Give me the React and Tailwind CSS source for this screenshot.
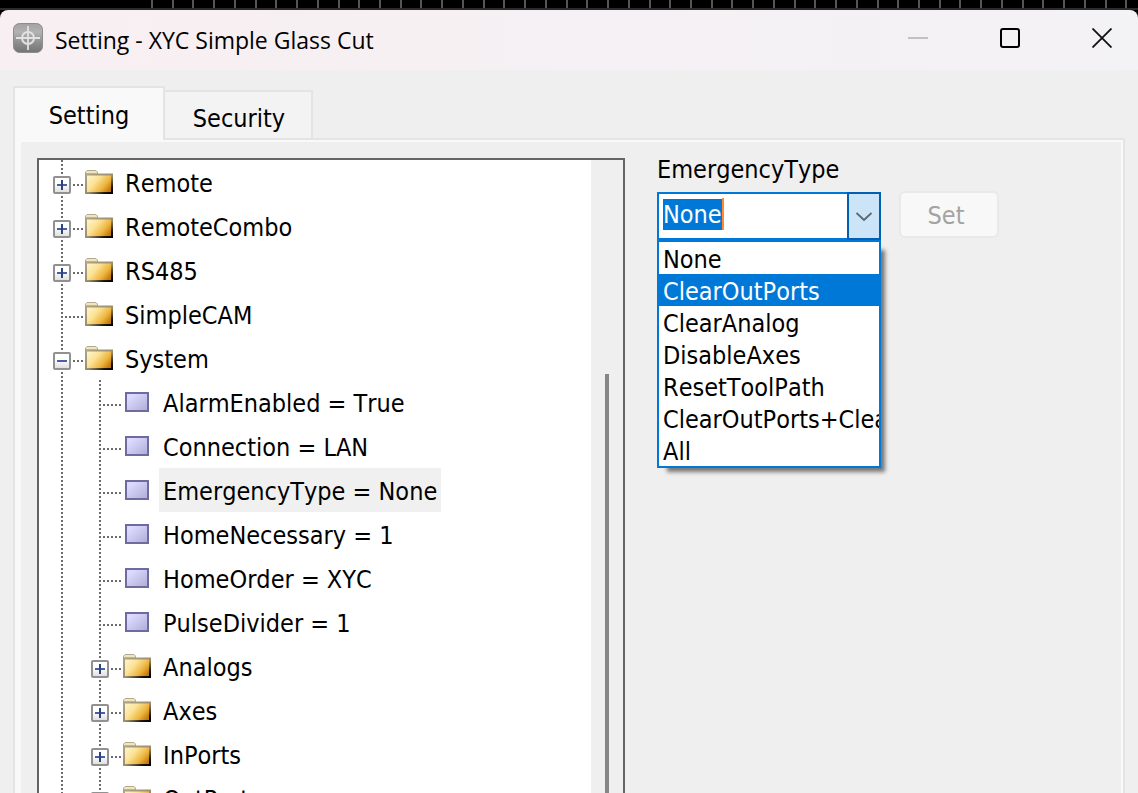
// App.jsx
import React, { useEffect, useRef, useState } from 'react';

const treeItems = [
  { label: 'Remote', level: 0, type: 'folder', toggle: 'plus' },
  { label: 'RemoteCombo', level: 0, type: 'folder', toggle: 'plus' },
  { label: 'RS485', level: 0, type: 'folder', toggle: 'plus' },
  { label: 'SimpleCAM', level: 0, type: 'folder' },
  { label: 'System', level: 0, type: 'folder', toggle: 'minus' },
  { label: 'AlarmEnabled = True', level: 1, type: 'value' },
  { label: 'Connection = LAN', level: 1, type: 'value' },
  { label: 'EmergencyType = None', level: 1, type: 'value' },
  { label: 'HomeNecessary = 1', level: 1, type: 'value' },
  { label: 'HomeOrder = XYC', level: 1, type: 'value' },
  { label: 'PulseDivider = 1', level: 1, type: 'value' },
  { label: 'Analogs', level: 1, type: 'folder', toggle: 'plus' },
  { label: 'Axes', level: 1, type: 'folder', toggle: 'plus' },
  { label: 'InPorts', level: 1, type: 'folder', toggle: 'plus' },
  { label: 'OutPorts', level: 1, type: 'folder', toggle: 'plus' }
];

const emergencyOptions = [
  'None',
  'ClearOutPorts',
  'ClearAnalog',
  'DisableAxes',
  'ResetToolPath',
  'ClearOutPorts+ClearAnalog',
  'All'
];

const AppIcon = () => (
  <svg className="w-8 h-8" viewBox="0 0 32 32" aria-hidden="true">
    <defs>
      <linearGradient id="appBg" x1="0" y1="0" x2="0" y2="1">
        <stop offset="0" stopColor="#a2a2a2" />
        <stop offset="0.3" stopColor="#b2b2b2" />
        <stop offset="0.6" stopColor="#939393" />
        <stop offset="1" stopColor="#747474" />
      </linearGradient>
    </defs>
    <rect x="1.500" y="1.500" width="29" height="29" rx="6" fill="url(#appBg)" stroke="#8c8c8c" />
    <g stroke="#e2e2e2" fill="none" strokeWidth="2">
      <circle cx="16" cy="16" r="6" />
      <path d="M16 4V28M4 16H28" strokeWidth="1.800" />
    </g>
  </svg>
);

const FolderIcon = () => (
  <svg className="w-7 h-6 ml-1" viewBox="0 0 28 24" aria-hidden="true">
    <defs>
      <linearGradient id="folderFill" x1="0" y1="0.1" x2="1" y2="0.7">
        <stop offset="0" stopColor="#fff6cf" />
        <stop offset="0.4" stopColor="#fbe294" />
        <stop offset="0.75" stopColor="#edb33c" />
        <stop offset="1" stopColor="#c17a0b" />
      </linearGradient>
      <linearGradient id="folderEdge" x1="0" y1="0" x2="1" y2="1">
        <stop offset="0" stopColor="#aea38a" />
        <stop offset="0.55" stopColor="#9c8d68" />
        <stop offset="0.85" stopColor="#1c1408" />
        <stop offset="1" stopColor="#000000" />
      </linearGradient>
    </defs>
    <path d="M0.500 4V2L2 0.500H11L12.500 2V4Z" fill="#f0e6b8" stroke="#b5ab90" />
    <path d="M1 4.500H27V23H1Z" fill="url(#folderFill)" stroke="url(#folderEdge)" strokeWidth="2" />
  </svg>
);

const ValueIcon = () => (
  <svg className="w-6 h-5 ml-[6px]" viewBox="0 0 24 20" aria-hidden="true">
    <defs>
      <linearGradient id="valueFill" x1="0" y1="0" x2="1" y2="1">
        <stop offset="0.2" stopColor="#dcdaff" />
        <stop offset="1" stopColor="#aeacd6" />
      </linearGradient>
    </defs>
    <rect x="1" y="1" width="22" height="18" fill="url(#valueFill)" stroke="#6e6c9e" strokeWidth="2" />
  </svg>
);

const ToggleButton = ({ kind, label }) => (
  <button
    type="button"
    aria-label={`${kind === 'plus' ? 'Expand' : 'Collapse'} ${label}`}
    className="relative w-[18px] h-[18px] outline-2 outline-white"
  >
    <svg className="w-full h-full" viewBox="0 0 18 18" aria-hidden="true">
      <defs>
        <linearGradient id="toggleFill" x1="0" y1="0" x2="0" y2="1">
          <stop offset="0.4" stopColor="#ffffff" />
          <stop offset="1" stopColor="#dcdcdc" />
        </linearGradient>
      </defs>
      <rect x="1" y="1" width="16" height="16" rx="1" fill="url(#toggleFill)" stroke="#919191" strokeWidth="2" />
      <path d="M4 9H14" stroke="#4560a8" strokeWidth="2" />
      {kind === 'plus' && <path d="M9 4V14" stroke="#2c437c" strokeWidth="2" />}
    </svg>
  </button>
);

// Dotted branch lines of one indent level
const Branch = ({ elbow }) => (
  <svg className="absolute inset-0 w-10 h-11" viewBox="0 0 40 44" aria-hidden="true">
    <path d="M19 0V44" stroke="#6b6b6b" strokeWidth="2" strokeDasharray="2 2" />
    {elbow && <path d="M22 25H40" stroke="#6b6b6b" strokeWidth="2" strokeDasharray="2 2" />}
  </svg>
);

const TreeRow = ({ item, selected, onSelect }) => (
  <li role="treeitem" aria-selected={selected} aria-level={item.level + 1} className="flex h-11">
    {item.level > 0 && (
      <span className="relative w-[38px] shrink-0">
        <Branch />
      </span>
    )}
    <span className="relative flex w-[38px] shrink-0 justify-center pt-4">
      <Branch elbow />
      {item.toggle && <ToggleButton kind={item.toggle} label={item.label} />}
    </span>
    <span className={`w-10 shrink-0 ${item.type === 'folder' ? 'pt-[10px]' : 'pt-3'}`}>
      {item.type === 'folder' ? <FolderIcon /> : <ValueIcon />}
    </span>
    <button
      type="button"
      onClick={onSelect}
      className={`h-11 px-1 pt-[3px] whitespace-nowrap text-left ${selected ? 'bg-[#f0f0f0]' : ''}`}
    >
      {item.label}
    </button>
  </li>
);

const ViewportStrip = () => (
  <div className="h-[10px] overflow-hidden bg-black border-b-2 border-[#2b2b2b]">
    <svg className="w-full h-[10px]" aria-hidden="true">
      {Array.from({ length: 100 }, (_, i) => (
        <rect key={i} x={Math.round(151 + i * 20.73)} y="0" width="2" height="10" fill="#555555" />
      ))}
    </svg>
  </div>
);

const TitleBar = () => (
  <header className="flex h-[60px] items-center rounded-t-lg bg-linear-to-r from-[#f8eff2] to-[#f3f2f5] pl-3 font-['Open_Sans','Noto_Sans',sans-serif]">
    <div className="-mt-1">
      <AppIcon />
    </div>
    <h1 className="ml-[11px] text-[23px] leading-8 whitespace-nowrap">Setting - XYC Simple Glass Cut</h1>
    <div className="ml-auto flex h-14 gap-5 self-start">
      <button type="button" aria-label="Minimize" disabled className="grid w-[72px] place-items-center">
        <svg className="w-5 h-5" viewBox="0 0 20 20">
          <path d="M0 10H20" stroke="#c3c0c2" strokeWidth="2" />
        </svg>
      </button>
      <button type="button" aria-label="Maximize" className="grid w-[72px] place-items-center">
        <svg className="w-5 h-5" viewBox="0 0 20 20">
          <rect x="1" y="1" width="18" height="18" rx="2" fill="none" stroke="#000" strokeWidth="2" />
        </svg>
      </button>
      <button type="button" aria-label="Close" className="grid w-[72px] place-items-center">
        <svg className="w-5 h-5" viewBox="0 0 20 20">
          <path d="M0.500 0.500L19.500 19.500M19.500 0.500L0.500 19.500" stroke="#111" strokeWidth="1.800" />
        </svg>
      </button>
    </div>
  </header>
);

const EmergencyCombo = () => {
  const inputRef = useRef(null);
  const [value, setValue] = useState('None');
  const [active, setActive] = useState('ClearOutPorts');

  useEffect(() => {
    inputRef.current.focus();
    inputRef.current.select();
  }, []);

  return (
    <div className="relative w-56">
      <div className="flex h-12 border-2 border-[#0078d7] bg-white">
        <div className="flex flex-1 items-start pl-1 pt-1">
          <input
            ref={inputRef}
            id="emergencyType"
            type="text"
            role="combobox"
            aria-expanded="true"
            aria-controls="emergencyOptions"
            value={value}
            onChange={(e) => setValue(e.target.value)}
            className="h-8 field-sizing-content pt-0.5 leading-8 outline-none selection:bg-[#0078d7] selection:text-white"
          />
          <span className="h-8 w-0.5 bg-[#ff8a33]"></span>
        </div>
        <button
          type="button"
          aria-label="Show options"
          className="-my-0.5 -mr-0.5 grid w-[34px] place-items-center border-2 border-[#005fb3] bg-[#cce4f7]"
        >
          <svg className="w-4 h-4" viewBox="0 0 16 16" aria-hidden="true">
            <path d="M0.500 5L8 12L15.500 5" fill="none" stroke="#5c666f" strokeWidth="1.800" />
          </svg>
        </button>
      </div>
      <ul
        id="emergencyOptions"
        role="listbox"
        className="absolute top-full left-0 w-full overflow-hidden border-2 border-[#0078d7] bg-white shadow-[7px_7px_4px_-3px_rgba(0,0,0,0.5)]"
      >
        {emergencyOptions.map((option) => (
          <li
            key={option}
            role="option"
            aria-selected={option === active}
            onMouseEnter={() => setActive(option)}
            onClick={() => setValue(option)}
            className={`h-8 pl-1 leading-9 whitespace-nowrap ${option === active ? 'bg-[#0078d7] text-white' : ''}`}
          >
            {option}
          </li>
        ))}
      </ul>
    </div>
  );
};

const App = () => {
  const [selected, setSelected] = useState('EmergencyType = None');

  return (
    <div className="flex h-screen flex-col overflow-hidden bg-black font-['DejaVu_Sans_Condensed','DejaVu_Sans',sans-serif] text-[25px] text-black [font-kerning:none]">
      <ViewportStrip />
      <TitleBar />

      <main className="flex min-h-0 flex-1 flex-col bg-[#efefef] pt-4 pl-[13px] pr-[13px]">
        {/* Tabs */}
        <div role="tablist" className="relative -mb-0.5 flex items-end">
          <button
            type="button"
            role="tab"
            aria-selected="true"
            className="h-[54px] w-[152px] border-2 border-b-0 border-[#e4e4e4] bg-[#f9f9f9] pt-1"
          >
            Setting
          </button>
          <button
            type="button"
            role="tab"
            aria-selected="false"
            className="h-[50px] w-[148px] border-2 border-l-0 border-[#e4e4e4] bg-[#f3f3f3] pt-2 pl-0.5"
          >
            Security
          </button>
        </div>

        {/* Tab page */}
        <div className="min-h-0 flex-1 border-2 border-b-0 border-[#e4e4e4] bg-[#f9f9f9] pt-0.5 pr-0.5 pl-1.5">
          <div className="flex h-full bg-[#efefef] pl-4 pt-4">
            <div className="flex h-full w-[588px] shrink-0 border-2 border-b-0 border-[#646464] bg-white">
              <ul role="tree" className="min-w-0 flex-1 overflow-hidden pl-1">
                {treeItems.map((item) => (
                  <TreeRow
                    key={item.label}
                    item={item}
                    selected={selected === item.label}
                    onSelect={() => setSelected(item.label)}
                  />
                ))}
              </ul>
              <div className="flex w-8 justify-center bg-[#efefef] pt-[214px]">
                <div className="w-1 bg-[#868686]"></div>
              </div>
            </div>

            <div className="ml-8 min-w-0 flex-1">
              <label htmlFor="emergencyType" className="-mt-1 block h-[38px] leading-8">
                EmergencyType
              </label>
              <div className="flex items-start gap-[18px]">
                <EmergencyCombo />
                <button
                  type="button"
                  disabled
                  className="-mt-px h-[47px] w-[100px] rounded-md border-2 border-[#e9e9e9] bg-[#f8f8f8] pt-0.5 pr-1.5 text-[#a3a3a3]"
                >
                  Set
                </button>
              </div>
            </div>
          </div>
        </div>
      </main>
    </div>
  );
};

export default App;
